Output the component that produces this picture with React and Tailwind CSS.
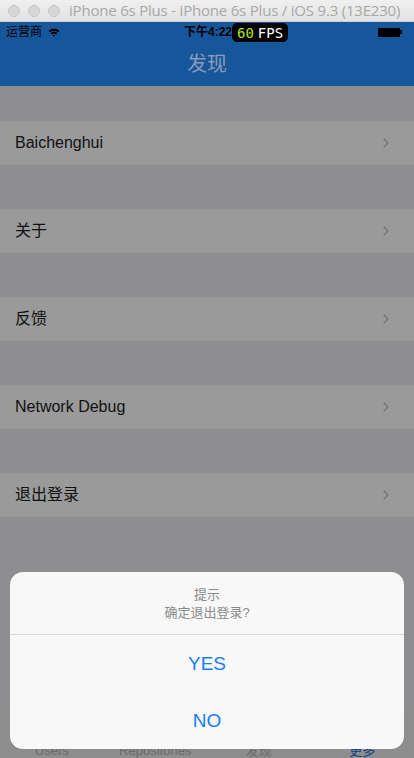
import { ChevronRight } from "lucide-react";

const rows = ["Baichenghui", "关于", "反馈", "Network Debug", "退出登录"];
const tabs = ["Users", "Repositories", "发现", "更多"];

const font = {
  fontFamily: '"Liberation Sans", "Noto Sans CJK SC", sans-serif',
};

const WindowBar = () => (
  <div className="flex h-[22px] items-center border-b border-[#cfcfcf] bg-gradient-to-b from-[#f0f0f0] to-[#e2e2e2] pl-[8px]">
    <div className="flex gap-[8px]">
      <span className="h-[12px] w-[12px] rounded-full border border-[#c6c6c6] bg-[#d6d6d6]" />
      <span className="h-[12px] w-[12px] rounded-full border border-[#c6c6c6] bg-[#d6d6d6]" />
      <span className="h-[12px] w-[12px] rounded-full border border-[#c6c6c6] bg-[#d6d6d6]" />
    </div>
    <span className="ml-[9px] whitespace-nowrap text-[15px] tracking-[-0.2px] text-[#a8a8a8]" style={{ fontFamily: '"Open Sans", sans-serif' }}>
      iPhone 6s Plus - iPhone 6s Plus / iOS 9.3 (13E230)
    </span>
  </div>
);

const StatusBar = () => (
  <div className="relative flex h-[20px] items-center px-[6px] text-[12px] text-black">
    <div className="flex items-center gap-[6px]">
      <span>运营商</span>
      <svg width="12" height="9" viewBox="0 0 12 9">
        <path d="M0.5 3 A8 8 0 0 1 11.5 3 L10.2 4.3 A6.2 6.2 0 0 0 1.8 4.3 Z" fill="#000" />
        <path d="M2.6 5.1 A5 5 0 0 1 9.4 5.1 L8.1 6.4 A3.2 3.2 0 0 0 3.9 6.4 Z" fill="#000" />
        <path d="M4.7 7.2 A2 2 0 0 1 7.3 7.2 L6 8.6 Z" fill="#000" />
      </svg>
    </div>
    <span className="ml-[124px] font-semibold">下午4:22</span>
    <div className="absolute left-[232px] top-[1px] flex h-[19px] items-center gap-[4px] rounded-[5px] bg-black px-[5px] text-[14px] leading-none" style={{ fontFamily: '"DejaVu Sans Mono", monospace' }}>
      <span className="text-[#b4e41a]">60</span>
      <span className="text-white">FPS</span>
    </div>
    <div className="ml-auto mr-[6px] flex items-center">
      <span className="h-[9px] w-[22px] rounded-[1px] bg-black" />
      <span className="h-[4px] w-[2px] bg-black" />
    </div>
  </div>
);

const Row = ({ label }) => (
  <div className="mt-[44px] flex h-[44px] items-center justify-between bg-[#9a9a9a] pl-[15px] pr-[20px] first:mt-[35px]">
    <span className="text-[16px] text-[#111111]">{label}</span>
    <ChevronRight size={16} strokeWidth={2} className="text-[#747474]" />
  </div>
);

export default function App() {
  return (
    <div className="relative flex h-[758px] w-[414px] flex-col overflow-hidden bg-[#8e8e90]" style={font}>
      <WindowBar />
      <div className="bg-[#16569a]">
        <StatusBar />
        <div className="flex h-[44px] items-center justify-center text-[20px] text-[#8b9bb3]">发现</div>
      </div>
      <div className="flex flex-1 flex-col">
        {rows.map((r) => (
          <Row key={r} label={r} />
        ))}
      </div>
      <div className="grid h-[49px] grid-cols-4 items-end bg-[#8d8d8d] text-[13px] leading-[14px] text-[#6a6a6a]">
        {tabs.map((t, i) => (
          <span key={t} className={`text-center ${i === 3 ? "text-[#0d3f8c]" : ""}`}>
            {t}
          </span>
        ))}
      </div>

      <div className="absolute left-[10px] top-[572px] w-[394px] overflow-hidden rounded-[13px] bg-[#f8f8f8]">
        <div className="flex h-[63px] flex-col items-center justify-center border-b border-[#dadada] pt-[2px] text-[13px] leading-[18px] text-[#8a8a8a]">
          <span>提示</span>
          <span>确定退出登录?</span>
        </div>
        <div className="flex h-[57px] items-center justify-center pt-[2px] text-[19px] text-[#1a7cf5]">YES</div>
        <div className="flex h-[57px] items-center justify-center pt-[2px] text-[19px] text-[#1a7cf5]">NO</div>
      </div>
    </div>
  );
}
